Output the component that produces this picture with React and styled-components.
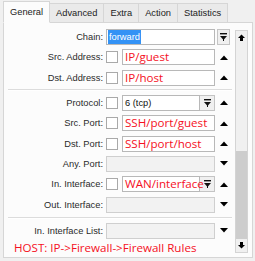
import React from "react";
import styled, { createGlobalStyle } from "styled-components";

const GlobalStyle = createGlobalStyle`
  html, body {
    margin: 0;
    padding: 0;
    background: #f0f0f0;
  }
`;

const tabs = ["General", "Advanced", "Extra", "Action", "Statistics"];

const App = () => {
  return (
    <>
      <GlobalStyle />
      <Window>
        <TabBar>
          {tabs.map((t, i) => (
            <Tab key={t} $active={i === 0}>
              {t}
            </Tab>
          ))}
        </TabBar>
        <Panel>
          <Form>
            <Row>
              <Label>Chain:</Label>
              <Field>
                <Selected>forward</Selected>
              </Field>
              <ArrowCell>
                <DropBtn $boxed>
                  <DropIcon />
                </DropBtn>
              </ArrowCell>
            </Row>
            <Row>
              <Label>Src. Address:</Label>
              <Check />
              <Field>
                <RedText>IP/guest</RedText>
              </Field>
              <ArrowCell>
                <Tri up />
              </ArrowCell>
            </Row>
            <Row>
              <Label>Dst. Address:</Label>
              <Check />
              <Field>
                <RedText>IP/host</RedText>
              </Field>
              <ArrowCell>
                <Tri up />
              </ArrowCell>
            </Row>
            <Separator />
            <Row>
              <Label>Protocol:</Label>
              <Check />
              <Field>
                <PlainText>6 (tcp)</PlainText>
              </Field>
              <DropBtn>
                <DropIcon />
              </DropBtn>
              <ArrowCell>
                <Tri up />
              </ArrowCell>
            </Row>
            <Row>
              <Label>Src. Port:</Label>
              <Check />
              <Field>
                <RedText>SSH/port/guest</RedText>
              </Field>
              <ArrowCell>
                <Tri up />
              </ArrowCell>
            </Row>
            <Row>
              <Label>Dst. Port:</Label>
              <Check />
              <Field>
                <RedText>SSH/port/host</RedText>
              </Field>
              <ArrowCell>
                <Tri up />
              </ArrowCell>
            </Row>
            <Row>
              <Label>Any. Port:</Label>
              <Field $disabled />
              <ArrowCell>
                <Tri />
              </ArrowCell>
            </Row>
            <Row>
              <Label>In. Interface:</Label>
              <Check />
              <Field>
                <RedText>WAN/interface</RedText>
              </Field>
              <DropBtn>
                <DropIcon />
              </DropBtn>
              <ArrowCell>
                <Tri up />
              </ArrowCell>
            </Row>
            <Row>
              <Label>Out. Interface:</Label>
              <Field $disabled />
              <ArrowCell>
                <Tri />
              </ArrowCell>
            </Row>
            <Separator $wide />
            <Row>
              <Label>In. Interface List:</Label>
              <Field $disabled />
              <ArrowCell>
                <Tri />
              </ArrowCell>
            </Row>
            <Note>HOST: IP-&gt;Firewall-&gt;Firewall Rules</Note>
          </Form>
          <ScrollBar>
            <ScrollBtn>
              <ScrollArrow up />
            </ScrollBtn>
            <Track />
            <Thumb />
            <ScrollBtn>
              <ScrollArrow />
            </ScrollBtn>
          </ScrollBar>
        </Panel>
      </Window>
    </>
  );
};

const DropIcon = () => (
  <svg width="7" height="8" viewBox="0 0 7 8">
    <rect x="0" y="0" width="7" height="1.4" fill="#111" />
    <polygon points="0,3 7,3 3.5,7" fill="#111" />
    <rect x="3" y="6" width="1" height="2" fill="#111" />
  </svg>
);

const Tri = ({ up }) => (
  <svg width="8" height="5" viewBox="0 0 8 5">
    {up ? (
      <polygon points="0,5 8,5 4,0.5" fill="#000" />
    ) : (
      <polygon points="0,0 8,0 4,4.5" fill="#000" />
    )}
  </svg>
);

const ScrollArrow = ({ up }) => (
  <svg width="7" height="7" viewBox="0 0 7 7">
    {up ? (
      <>
        <polygon points="0,4 7,4 3.5,0.5" fill="#000" />
        <rect x="2" y="4" width="3" height="3" fill="#000" />
      </>
    ) : (
      <>
        <rect x="2" y="0" width="3" height="3" fill="#000" />
        <polygon points="0,3 7,3 3.5,6.5" fill="#000" />
      </>
    )}
  </svg>
);

export default App;

const Window = styled.div`
  width: 255px;
  height: 261px;
  background: #f0f0f0;
  font-family: "Liberation Sans", Arial, sans-serif;
  font-size: 9.3px;
  color: #222;
  display: flex;
  flex-direction: column;
  overflow: hidden;
`;

const TabBar = styled.div`
  display: flex;
  align-items: flex-end;
  height: 22px;
  padding-left: 3px;
  position: relative;
  z-index: 1;
`;

const Tab = styled.div`
  height: ${(p) => (p.$active ? "22px" : "19px")};
  padding: 0 6px;
  display: flex;
  align-items: center;
  justify-content: center;
  box-sizing: border-box;
  background: ${(p) => (p.$active ? "#fcfcfc" : "#eaeaea")};
  border: 1px solid #d6d6d6;
  border-bottom: ${(p) => (p.$active ? "1px solid #fcfcfc" : "none")};
  margin-left: -1px;
  margin-bottom: ${(p) => (p.$active ? "-1px" : "0")};
  color: #222;
  &:first-child {
    margin-left: 0;
  }
`;

const Panel = styled.div`
  margin: 0 2px 0 3px;
  height: 236px;
  box-sizing: border-box;
  border: 1px solid #d6d6d6;
  background: #fcfcfc;
  display: flex;
  padding-right: 4px;
`;

const Form = styled.div`
  width: 228px;
  padding-top: 3.8px;
  display: flex;
  flex-direction: column;
`;

const Row = styled.div`
  height: 20.4px;
  display: flex;
  align-items: center;
`;

const Label = styled.div`
  width: 99px;
  margin-right: 3px;
  flex-shrink: 0;
  text-align: right;
  white-space: nowrap;
  color: #2a2a2a;
`;

const Check = styled.div`
  width: 12px;
  height: 12px;
  box-sizing: border-box;
  border: 1px solid #a9a9a9;
  background: #fff;
  margin-right: 4px;
  flex-shrink: 0;
`;

const Field = styled.div`
  flex: 1;
  min-width: 0;
  height: 16px;
  box-sizing: border-box;
  border: 1px solid ${(p) => (p.$disabled ? "#cfcfcf" : "#b8b8b8")};
  background: ${(p) => (p.$disabled ? "#f2f2f2" : "#fff")};
  display: flex;
  align-items: center;
  padding-left: 1px;
  white-space: nowrap;
  overflow: visible;
`;

const Selected = styled.span`
  background: #3392f5;
  color: #fff;
  padding: 1px 1px;
  line-height: 12px;
`;

const PlainText = styled.span`
  color: #111;
  padding-left: 1px;
`;

const RedText = styled.span`
  position: relative;
  z-index: 1;
  font-family: "Open Sans", "Noto Sans", sans-serif;
  font-size: 11.6px;
  color: #f5101e;
  padding-left: 1px;
  line-height: 14px;
`;

const DropBtn = styled.div`
  width: ${(p) => (p.$boxed ? "13px" : "15px")};
  height: 16px;
  box-sizing: border-box;
  border: 1px solid #c4c4c4;
  border-left: ${(p) => (p.$boxed ? "1px solid #c4c4c4" : "none")};
  background: #f0f0f0;
  display: flex;
  align-items: center;
  justify-content: center;
  flex-shrink: 0;
`;

const ArrowCell = styled.div`
  width: 17px;
  height: 16px;
  display: flex;
  align-items: center;
  justify-content: center;
  flex-shrink: 0;
`;

const Separator = styled.div`
  height: ${(p) => (p.$wide ? "5.6px" : "4.6px")};
  display: flex;
  align-items: center;
  padding-left: 4px;
  &::before {
    content: "";
    flex: 1;
    height: 1px;
    background: #dcdcdc;
    border-bottom: 1px solid #fff;
  }
`;

const Note = styled.div`
  font-family: "Open Sans", "Noto Sans", sans-serif;
  font-size: 11.6px;
  color: #f5101e;
  padding-left: 10px;
  line-height: 14px;
  white-space: nowrap;
`;

const ScrollBar = styled.div`
  width: 13px;
  margin: 7px 0 4px 3px;
  box-sizing: border-box;
  border: 1px solid #d4d4d4;
  background: #f0f0f0;
  display: flex;
  flex-direction: column;
`;

const ScrollBtn = styled.div`
  height: 13px;
  display: flex;
  align-items: center;
  justify-content: center;
  background: #f0f0f0;
  flex-shrink: 0;
`;

const Track = styled.div`
  flex: 1;
  background: #f0f0f0;
`;

const Thumb = styled.div`
  height: 88px;
  background: #cdcdcd;
  flex-shrink: 0;
`;
